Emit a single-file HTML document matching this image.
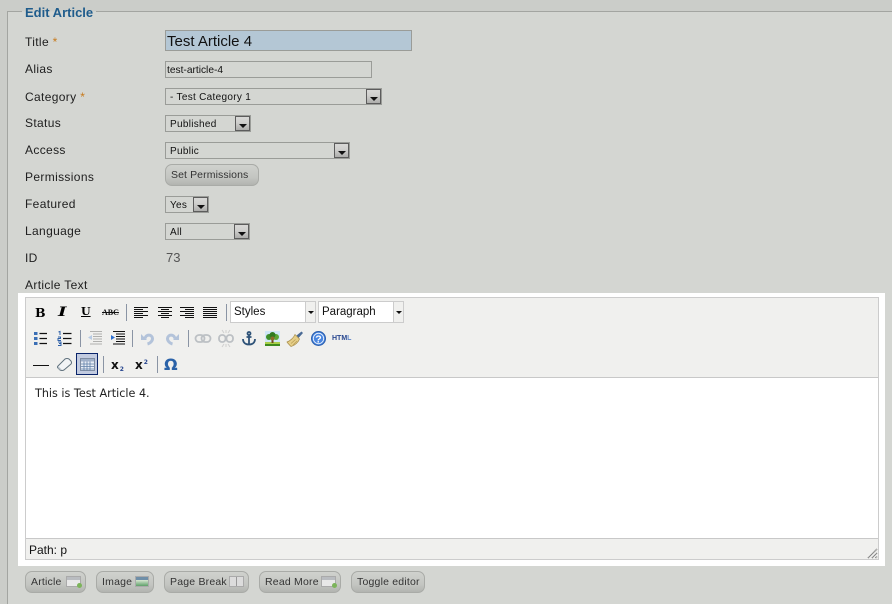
<!DOCTYPE html>
<html><head><meta charset="utf-8">
<style>
html,body{margin:0;padding:0}
body{width:892px;height:604px;overflow:hidden;position:relative;background:#d4d6d2;font-family:"Liberation Sans",sans-serif;color:#1a1a1a}
.a{position:absolute}
.l{position:absolute;left:25px;font-size:12px;line-height:14px;letter-spacing:.35px;color:#202020;white-space:nowrap}
.req{color:#c77a1c}
.sel{position:absolute;box-sizing:border-box;height:17px;border:1px solid #9a9c98;background:#d4d6d2;font-size:10px;line-height:17px;padding-left:4px;letter-spacing:.3px;color:#111}
.sel i{position:absolute;right:0;top:0;width:15px;height:15px;box-sizing:border-box;border:1px solid #5c5c5c;background:linear-gradient(#d8d8d6,#d0d0ce 40%,#aeaeac)}
.sel i:after{content:"";position:absolute;left:3px;top:7px;border:4px solid transparent;border-top:4px solid #111;border-bottom:0}
.btn{position:absolute;box-sizing:border-box;height:22px;border:1px solid #a9aba7;border-radius:7px;background:linear-gradient(#d0d2ce,#c4c6c2 60%,#b2b4b0);font-size:10.5px;line-height:20px;color:#333;letter-spacing:.2px;white-space:nowrap;padding-left:5px}
.bi{position:absolute;top:4px;width:15px;height:11px;box-sizing:border-box;border:1px solid #aaa;background:linear-gradient(#b9bcc0 35%,#e8e8e8 35%)}
.bi b{position:absolute;right:-2px;bottom:-2px;width:5px;height:5px;border-radius:50%;background:#7cb45a}
svg{position:absolute;overflow:visible}
.sep{position:absolute;width:1px;height:17px;background:#8a94a4}
</style></head>
<body>
<div class="a" style="left:0;top:0;width:892px;height:11px;background:#cbcdc9"></div>
<div class="a" style="left:0;top:0;width:7px;height:604px;background:#cbcdc9"></div>
<div class="a" style="left:7px;top:11px;width:885px;height:1px;background:#a3a5a1"></div>
<div class="a" style="left:7px;top:11px;width:1px;height:593px;background:#a3a5a1"></div>
<div class="a" style="left:22px;top:5px;padding:0 3px;background:linear-gradient(#cbcdc9 6px,#d4d6d2 7px);font-size:13px;line-height:16px;font-weight:bold;color:#1f5c8c;white-space:nowrap">Edit Article</div>

<div class="l" style="top:35px">Title <span class="req">*</span></div>
<div class="l" style="top:62px">Alias</div>
<div class="l" style="top:90px">Category <span class="req">*</span></div>
<div class="l" style="top:116px">Status</div>
<div class="l" style="top:143px">Access</div>
<div class="l" style="top:170px">Permissions</div>
<div class="l" style="top:197px">Featured</div>
<div class="l" style="top:224px">Language</div>
<div class="l" style="top:251px">ID</div>
<div class="l" style="top:278px">Article Text</div>

<div class="a" style="left:165px;top:30px;width:247px;height:21px;box-sizing:border-box;border:1px solid #9a9c98;background:#b4c7d5;font-size:15px;line-height:21px;padding-left:1px;color:#111;white-space:nowrap">Test Article 4</div>
<div class="a" style="left:165px;top:61px;width:207px;height:17px;box-sizing:border-box;border:1px solid #9a9c98;background:#d4d6d2;font-size:10.2px;line-height:17px;padding-left:1px;color:#111">test-article-4</div>
<div class="sel" style="left:165px;top:88px;width:217px">- Test Category 1<i></i></div>
<div class="sel" style="left:165px;top:115px;width:86px">Published<i></i></div>
<div class="sel" style="left:165px;top:142px;width:185px">Public<i></i></div>
<div class="btn" style="left:165px;top:164px;width:94px;padding-left:5px;letter-spacing:.1px;line-height:21px">Set Permissions</div>
<div class="sel" style="left:165px;top:196px;width:44px">Yes<i></i></div>
<div class="sel" style="left:165px;top:223px;width:85px">All<i></i></div>
<div class="a" style="left:166px;top:250px;font-size:13px;line-height:15px;color:#555">73</div>

<!-- editor -->
<div class="a" style="left:18px;top:293px;width:867px;height:273px;background:#fff"></div>
<div class="a" style="left:25px;top:297px;width:854px;height:263px;box-sizing:border-box;border:1px solid #ccc;background:#f0f0ee"></div>
<div class="a" style="left:26px;top:377px;width:852px;height:162px;box-sizing:border-box;border-top:1px solid #c8c8c8;border-bottom:1px solid #c8c8c8;background:#fff"></div>
<div class="a" style="left:35px;top:386px;font-family:'DejaVu Sans',sans-serif;font-size:11.2px;line-height:15px;color:#222;white-space:nowrap">This is Test Article 4.</div>
<div class="a" style="left:29px;top:543px;font-size:12px;line-height:14px;color:#111">Path: p</div>
<svg style="left:867px;top:548px" width="11" height="11" viewBox="0 0 11 11"><path d="M1 10 10 1M5 10 10 5M8.500 10 10 8.500" stroke="#7d7d7d" stroke-width="1.500" stroke-dasharray="1 .5" fill="none"/></svg>

<!-- toolbar row 1 -->
<div class="a" style="left:35px;top:305px;font:bold 12.500px/15px 'DejaVu Serif',serif;color:#000">B</div>
<div class="a" style="left:58px;top:305px;font:italic bold 13px/16px 'DejaVu Serif',serif;color:#000;transform:scaleX(1.4);transform-origin:0 0">I</div>
<div class="a" style="left:81px;top:305px;font:bold 11px/14px 'DejaVu Serif',serif;color:#000;text-decoration:underline">U</div>
<div class="a" style="left:102px;top:308px;font:bold 8px/10px 'Liberation Serif',serif;color:#111;text-decoration:line-through">ABC</div>
<div class="sep" style="left:126px;top:304px"></div>
<svg style="left:134px;top:307px" width="84" height="12" viewBox="0 0 84 12" stroke="#111" fill="none">
<path d="M0 .5H14M0 2.500H9M0 4.500H14M0 6.500H9M0 8.500H14M0 10.500H9"/>
<path d="M24 .5H38M27 2.500H35M24 4.500H38M27 6.500H35M24 8.500H38M27 10.500H35"/>
<path d="M46 .5H60M51 2.500H60M46 4.500H60M51 6.500H60M46 8.500H60M51 10.500H60"/>
<path d="M69 .5H83M69 2.500H83M69 4.500H83M69 6.500H83M69 8.500H83M69 10.500H83"/>
</svg>
<div class="sep" style="left:226px;top:304px"></div>
<div class="a" style="left:230px;top:301px;width:86px;height:22px;box-sizing:border-box;border:1px solid #ccc;background:#f0f0ee"></div>
<div class="a" style="left:231px;top:302px;width:74px;height:20px;background:#fff;font-size:11.500px;line-height:21px;padding-left:3px;box-sizing:border-box;color:#111">Styles</div>
<div class="a" style="left:305px;top:302px;width:1px;height:20px;background:#ccc"></div>
<div class="a" style="left:308px;top:311px;border:3px solid transparent;border-top:3px solid #111;border-bottom:0"></div>
<div class="a" style="left:318px;top:301px;width:86px;height:22px;box-sizing:border-box;border:1px solid #ccc;background:#f0f0ee"></div>
<div class="a" style="left:319px;top:302px;width:74px;height:20px;background:#fff;font-size:11.500px;line-height:21px;padding-left:3px;box-sizing:border-box;color:#111">Paragraph</div>
<div class="a" style="left:393px;top:302px;width:1px;height:20px;background:#ccc"></div>
<div class="a" style="left:396px;top:311px;border:3px solid transparent;border-top:3px solid #111;border-bottom:0"></div>

<!-- row 2 -->
<svg style="left:34px;top:331px" width="16" height="15" viewBox="0 0 16 15" fill="none"><path d="M5.500 2.500H13M5.500 7.500H13M5.500 12.500H13" stroke="#111" stroke-width="1.200"/><path d="M0 1h3.500v3H0zM0 6h3.500v3H0zM0 11h3.500v3H0z" fill="#3b6fb5"/></svg>
<svg style="left:57px;top:331px" width="16" height="15" viewBox="0 0 16 15" fill="none"><path d="M6 2.500H14.500M6 7.500H14.500M6 12.500H14.500" stroke="#111" stroke-width="1.200"/><path d="M1.500 1 3 .5V4M1 6h2.500v1.500H1V9.500h3M1 11h3v1.500H2 4V14.500H1" stroke="#2d5fa8"/></svg>
<div class="sep" style="left:80px;top:330px"></div>
<svg style="left:87px;top:331px" width="16" height="15" viewBox="0 0 16 15" fill="none"><path d="M3 .5H15M6 3H15M6 5.500H15M6 8H15M6 10.500H15M3 13H15" stroke="#b0b0ae" stroke-width="1.100"/><path d="M5 4V9L1 6.500z" fill="#b8cbe4"/></svg>
<svg style="left:110px;top:331px" width="16" height="15" viewBox="0 0 16 15" fill="none"><path d="M3 .5H15M6 3H15M6 5.500H15M6 8H15M6 10.500H15M3 13H15" stroke="#111" stroke-width="1.100"/><path d="M1 4V9L5 6.500z" fill="#2d6fd0"/></svg>
<div class="sep" style="left:132px;top:330px"></div>
<svg style="left:141px;top:332px" width="14" height="13" viewBox="0 0 14 13" fill="none"><path d="M4 6.500C5 2 11 2 11.500 6.500C11.500 9.500 8.500 11.500 6.500 12" stroke="#b3c3da" stroke-width="3"/><path d="M0 2V8H6z" fill="#b3c3da"/></svg>
<svg style="left:165px;top:332px" width="14" height="13" viewBox="0 0 14 13" fill="none"><path d="M10 6.500C9 2 3 2 2.500 6.500C2.500 9.500 5.500 11.500 7.500 12" stroke="#b3c3da" stroke-width="3"/><path d="M14 2V8H8z" fill="#b3c3da"/></svg>
<div class="sep" style="left:188px;top:330px"></div>
<svg style="left:195px;top:334px" width="16" height="9" viewBox="0 0 16 9" fill="none"><rect x=".5" y="1" width="9" height="7" rx="3.500" stroke="#bcc0c4" stroke-width="1.800"/><rect x="6.500" y="1" width="9" height="7" rx="3.500" stroke="#bcc0c4" stroke-width="1.800"/></svg>
<svg style="left:218px;top:330px" width="16" height="17" viewBox="0 0 16 17" fill="none"><rect x="1" y="5" width="6.500" height="7" rx="3" stroke="#bcc0c4" stroke-width="1.800"/><rect x="8.500" y="5" width="6.500" height="7" rx="3" stroke="#bcc0c4" stroke-width="1.800"/><path d="M4 0l2 3M8 0v3M12 0l-2 3M4 17l2-3M8 17v-3M12 17l-2-3" stroke="#cfcfcf"/></svg>
<svg style="left:242px;top:331px" width="14" height="15" viewBox="0 0 14 15" fill="none" stroke="#2f5378" stroke-width="1.800"><circle cx="7" cy="2.500" r="1.500"/><path d="M7 4V13.500M4.500 6H9.500M1 8C1 12 4 13.500 7 13.500C10 13.500 13 12 13 8"/></svg>
<svg style="left:265px;top:331px" width="15" height="15" viewBox="0 0 15 15"><rect width="15" height="15" fill="#cfe6f7"/><rect y="11" width="15" height="2" fill="#a8cf4a"/><rect y="13" width="15" height="2" fill="#3e8a1e"/><rect x="6.500" y="8" width="2" height="4" fill="#6d4420"/><circle cx="4" cy="6" r="3" fill="#3f8f2b"/><circle cx="11" cy="6" r="3" fill="#5aa637"/><circle cx="7.500" cy="4" r="3" fill="#2f7a20"/><circle cx="7.500" cy="7.500" r="2" fill="#8a6a2a"/></svg>
<svg style="left:287px;top:331px" width="16" height="16" viewBox="0 0 16 16"><path d="M9.500 4.500L14.500 .5l1.500 1.500L11.500 7z" fill="#4a6a95"/><path d="M8 3.500L12.500 8C11.500 11 8 14.500 4 15.500C3 14.500 1 12.500 0 11C3 10 6.500 7 8 3.500z" fill="#e6cf88" stroke="#a98f4c" stroke-width=".7"/><path d="M4 12.500L8.500 8.500M6 14L10 10" stroke="#b89c55" stroke-width=".7"/></svg>
<svg style="left:311px;top:331px" width="15" height="15" viewBox="0 0 15 15"><circle cx="7.500" cy="7.500" r="7" fill="#3d7bd8" stroke="#2b5fae"/><circle cx="7.500" cy="7.500" r="5.200" fill="#4a86e0" stroke="#e4eefb"/><text x="7.500" y="11.500" text-anchor="middle" font-family="Liberation Sans" font-weight="bold" font-size="10.500" fill="#fff">?</text></svg>
<div class="a" style="left:332px;top:334px;font:bold 7px/9px 'Liberation Sans',sans-serif;color:#27468f;white-space:nowrap">HTM<span style="color:#5f86c8">L</span></div>

<!-- row 3 -->
<div class="a" style="left:33px;top:365px;width:16px;height:1px;background:#111"></div>
<svg style="left:57px;top:358px" width="15" height="13" viewBox="0 0 15 13"><path d="M1 8L8 1Q10 0 12 1L14 3Q15 5 14 6L7 12Q5 13 3 12L1 10Q0 9 1 8z" fill="#f2f4f6" stroke="#5f707c"/><path d="M1.500 8.500L5 12L3 12L1 10z" fill="#b4bec6"/></svg>
<div class="a" style="left:76px;top:353px;width:22px;height:22px;box-sizing:border-box;border:1px solid #0a246a;background:#c2cbe0"></div>
<svg style="left:80px;top:358px" width="15" height="13" viewBox="0 0 15 13"><rect x=".5" y=".5" width="14" height="12" fill="#e8edf5" stroke="#7f8da3"/><rect x="1" y="1" width="13" height="2.500" fill="#9fb0c9"/><path d="M1 6H14M1 8.500H14M1 11H14M4 3.500V12.500M7 3.500V12.500M10 3.500V12.500" stroke="#5f7fa8" stroke-width=".8"/></svg>
<div class="sep" style="left:103px;top:356px"></div>
<div class="a" style="left:111px;top:358px;font:bold 12px/14px 'DejaVu Sans',sans-serif;color:#111">x<span style="font-size:6px;color:#27468f;position:relative;top:2px;left:1px">2</span></div>
<div class="a" style="left:135px;top:358px;font:bold 12px/14px 'DejaVu Sans',sans-serif;color:#111">x<span style="font-size:6px;color:#27468f;position:relative;top:-5px;left:1px">2</span></div>
<div class="sep" style="left:157px;top:356px"></div>
<div class="a" style="left:164px;top:356px;font:bold 16px/18px 'DejaVu Sans',sans-serif;color:#2a62a8">Ω</div>

<!-- bottom buttons -->
<div class="btn" style="left:25px;top:571px;width:61px">Article<span class="bi" style="left:40px"><b></b></span></div>
<div class="btn" style="left:96px;top:571px;width:58px">Image<span class="bi" style="left:38px;width:14px;background:linear-gradient(#6f8fa8 35%,#d5e5d0 35%,#5fa06a)"></span></div>
<div class="btn" style="left:164px;top:571px;width:85px">Page Break<span class="bi" style="left:64px;background:linear-gradient(90deg,#dcdcdc 47%,#999 47%,#999 55%,#dcdcdc 55%)"></span></div>
<div class="btn" style="left:259px;top:571px;width:82px">Read More<span class="bi" style="left:61px"><b></b></span></div>
<div class="btn" style="left:351px;top:571px;width:74px">Toggle editor</div>
</body></html>
